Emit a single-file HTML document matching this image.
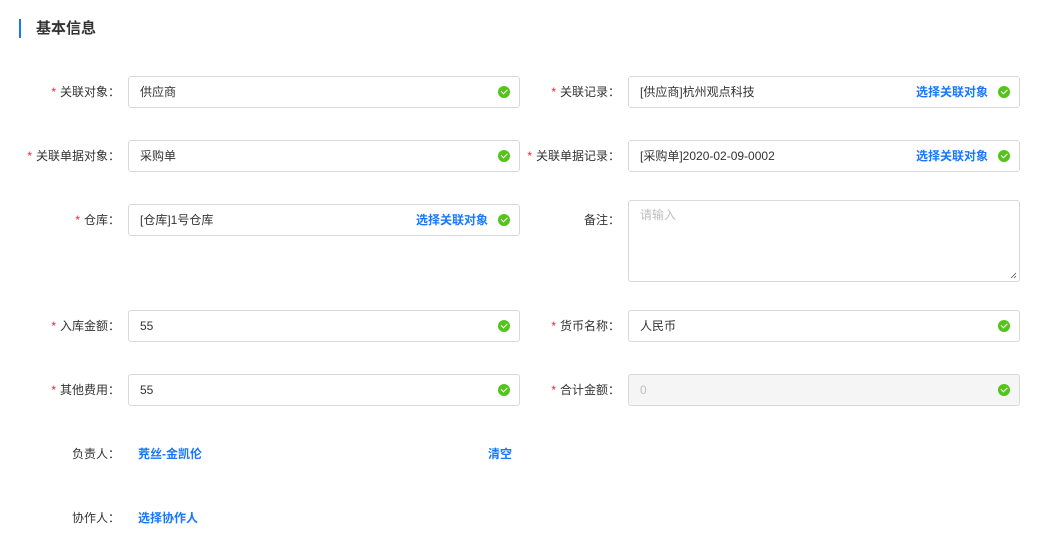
<!DOCTYPE html>
<html><head><meta charset="utf-8"><style>
body{margin:0;width:1047px;height:542px;background:#fff;font-family:"Liberation Sans","Noto Sans CJK SC",sans-serif;font-size:12px;color:#333;position:relative;overflow:hidden}
.bar{position:absolute;left:19px;top:19px;width:2px;height:19px;background:#1677ff}
.title{position:absolute;left:36px;top:19px;font-size:15px;font-weight:bold;color:#333;line-height:20px}
.lbl{position:absolute;width:200px;text-align:right;line-height:32px;color:#333}
.lbl i{color:#f5222d;font-style:normal;margin-right:4px}
.inp{position:absolute;width:390px;height:30px;border:1px solid #d9d9d9;border-radius:3px;line-height:30px;padding-left:11px;box-sizing:content-box;color:#333}
.ok{position:absolute;right:9px;top:9px;width:12px;height:12px;border-radius:50%;background:#52c41a}
.ok:after{content:"";position:absolute;left:3px;top:3px;width:5px;height:2.5px;border-left:1.3px solid #fff;border-bottom:1.3px solid #fff;transform:rotate(-45deg)}
.lk{position:absolute;color:#1677ff;font-weight:bold}
</style></head><body>
<div class="bar"></div><div class="title">基本信息</div>

<div class="lbl" style="left:-80px;top:76px"><i>*</i>关联对象：</div>
<div class="inp" style="left:128px;top:76px;width:379px">供应商<span class="ok"></span></div>
<div class="lbl" style="left:420px;top:76px"><i>*</i>关联记录：</div>
<div class="inp" style="left:628px;top:76px;width:379px">[供应商]杭州观点科技<span class="lk" style="right:31px;top:0">选择关联对象</span><span class="ok"></span></div>

<div class="lbl" style="left:-80px;top:140px"><i>*</i>关联单据对象：</div>
<div class="inp" style="left:128px;top:140px;width:379px">采购单<span class="ok"></span></div>
<div class="lbl" style="left:420px;top:140px"><i>*</i>关联单据记录：</div>
<div class="inp" style="left:628px;top:140px;width:379px">[采购单]2020-02-09-0002<span class="lk" style="right:31px;top:0">选择关联对象</span><span class="ok"></span></div>

<div class="lbl" style="left:-80px;top:204px"><i>*</i>仓库：</div>
<div class="inp" style="left:128px;top:204px;width:379px">[仓库]1号仓库<span class="lk" style="right:31px;top:0">选择关联对象</span><span class="ok"></span></div>
<div class="lbl" style="left:420px;top:204px">备注：</div>
<div class="inp" style="left:628px;top:200px;width:379px;height:80px;line-height:28px;color:#bfbfbf">请输入
<svg style="position:absolute;right:2px;bottom:2px" width="7" height="7"><path d="M1 6L6 1M4 6L6 4" stroke="#555" stroke-width="0.8"/></svg></div>

<div class="lbl" style="left:-80px;top:310px"><i>*</i>入库金额：</div>
<div class="inp" style="left:128px;top:310px;width:379px">55<span class="ok"></span></div>
<div class="lbl" style="left:420px;top:310px"><i>*</i>货币名称：</div>
<div class="inp" style="left:628px;top:310px;width:379px">人民币<span class="ok"></span></div>

<div class="lbl" style="left:-80px;top:374px"><i>*</i>其他费用：</div>
<div class="inp" style="left:128px;top:374px;width:379px">55<span class="ok"></span></div>
<div class="lbl" style="left:420px;top:374px"><i>*</i>合计金额：</div>
<div class="inp" style="left:628px;top:374px;width:379px;background:#f5f5f5;color:#bfbfbf">0<span class="ok"></span></div>

<div class="lbl" style="left:-80px;top:438px">负责人：</div>
<div class="lk" style="left:138px;top:445px">茺丝-金凯伦</div>
<div class="lk" style="left:488px;top:445px">清空</div>
<div class="lbl" style="left:-80px;top:502px">协作人：</div>
<div class="lk" style="left:138px;top:509px">选择协作人</div>
</body></html>
